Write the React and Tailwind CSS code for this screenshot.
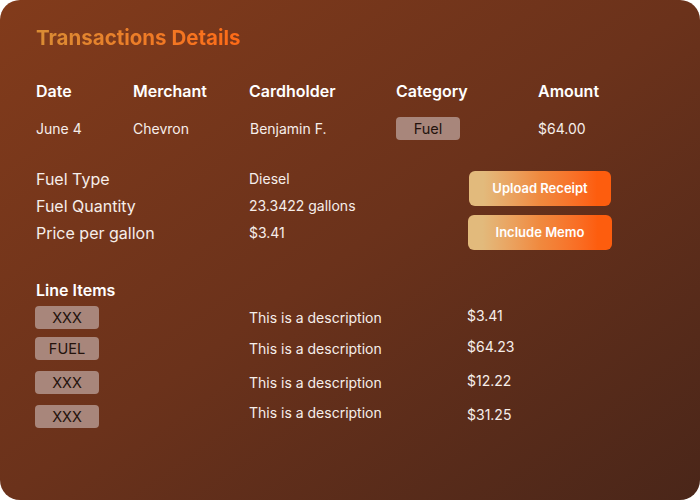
import React from "react";

const headers = ["Date", "Merchant", "Cardholder", "Category", "Amount"];

const details = [
  ["Fuel Type", "Diesel"],
  ["Fuel Quantity", "23.3422 gallons"],
  ["Price per gallon", "$3.41"],
];

const lineItems = [
  { tag: "XXX", desc: "This is a description", amount: "$3.41", mt: "mt-0", descPad: "pt-[1px]" },
  { tag: "FUEL", desc: "This is a description", amount: "$64.23", mt: "mt-[8px]", descPad: "pt-[1px]" },
  { tag: "XXX", desc: "This is a description", amount: "$12.22", mt: "mt-[11px]", descPad: "pt-0" },
  { tag: "XXX", desc: "This is a description", amount: "$31.25", mt: "mt-[11px]", descPad: "-mt-[8px]" },
];

const Tag = ({ children, className = "" }) => (
  <span
    className={`flex h-[23px] items-center justify-center rounded-[4px] bg-[#a8867b] text-[14.5px] text-[#24130d] ${className}`}
  >
    {children}
  </span>
);

const ActionButton = ({ children, className = "" }) => (
  <button
    className={`flex h-[35px] items-center justify-center rounded-[6px] bg-gradient-to-r from-[#e2ba7c] from-10% via-[#f0893e] to-[#fd5d0e] to-90% text-[13px] font-semibold text-white ${className}`}
  >
    {children}
  </button>
);

export default function App() {
  return (
    <div className="h-[500px] w-[700px] bg-white" style={{ fontFamily: "Inter, 'Noto Sans', sans-serif" }}>
      <div className="h-full w-full rounded-[20px] bg-gradient-to-br from-[#823b1b] via-[#6b321b] to-[#4a2619] pl-[36px] pt-[24px] text-[#f6eeea]">
        <h1 className="w-fit bg-gradient-to-r from-[#d98c34] to-[#ff6a16] bg-clip-text text-[20.5px] font-bold leading-[28px] text-transparent">
          Transactions Details
        </h1>

        <div className="mt-[29px] grid grid-cols-[97px_116px_147px_142px_1fr] text-[16px] font-semibold leading-[20px] text-white">
          {headers.map((h) => (
            <div key={h}>{h}</div>
          ))}
        </div>

        <div className="mt-[16px] grid grid-cols-[97px_116px_147px_142px_1fr] items-center text-[14px] leading-[23px]">
          <div>June 4</div>
          <div>Chevron</div>
          <div className="pl-[1px]">Benjamin F.</div>
          <div>
            <Tag className="w-[64px]">Fuel</Tag>
          </div>
          <div>$64.00</div>
        </div>

        <div className="mt-[25px] flex">
          <div className="w-[432px]">
            {details.map(([label, value]) => (
              <div key={label} className="flex h-[27px] items-center">
                <div className="w-[213px] text-[16px]">{label}</div>
                <div className="text-[14px]">{value}</div>
              </div>
            ))}
          </div>
          <div className="flex flex-col gap-[9px] pt-[6px]">
            <ActionButton className="ml-[1px] w-[142px]">Upload Receipt</ActionButton>
            <ActionButton className="w-[144px]">Include Memo</ActionButton>
          </div>
        </div>

        <h2 className="mt-[30px] text-[16px] font-semibold leading-[20px] text-white">Line Items</h2>

        <div className="mt-[6px] flex flex-col">
          {lineItems.map((item, i) => (
            <div key={i} className={`flex items-center ${item.mt}`}>
              <div className="-ml-[1px] w-[213px]">
                <Tag className="w-[64px]">{item.tag}</Tag>
              </div>
              <div className={`w-[219px] pl-[1px] text-[14px] leading-[20px] ${item.descPad}`}>{item.desc}</div>
              <div className="-mt-[4px] text-[14px] leading-[20px]">{item.amount}</div>
            </div>
          ))}
        </div>
      </div>
    </div>
  );
}
